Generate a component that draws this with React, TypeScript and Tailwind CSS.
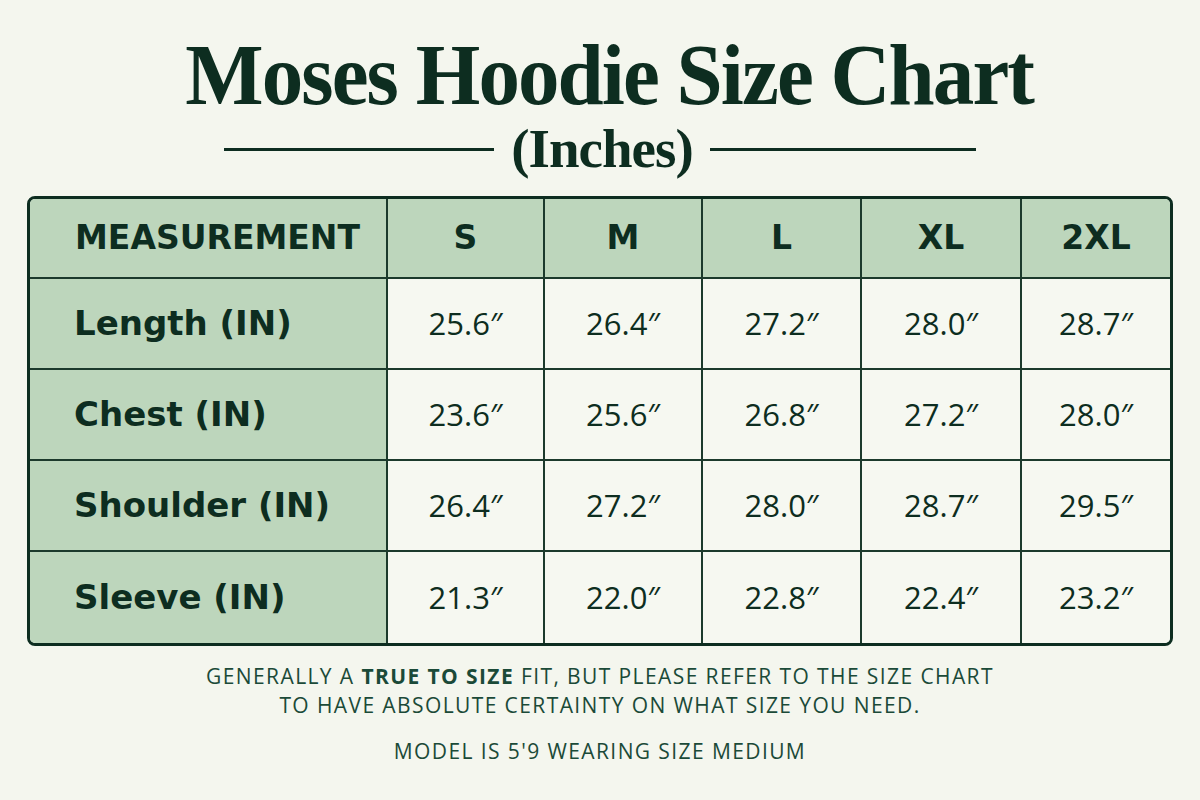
import React from "react";

const sizes = ["S", "M", "L", "XL", "2XL"];

const rows = [
  { label: "Length (IN)", values: ["25.6″", "26.4″", "27.2″", "28.0″", "28.7″"] },
  { label: "Chest (IN)", values: ["23.6″", "25.6″", "26.8″", "27.2″", "28.0″"] },
  { label: "Shoulder (IN)", values: ["26.4″", "27.2″", "28.0″", "28.7″", "29.5″"] },
  { label: "Sleeve (IN)", values: ["21.3″", "22.0″", "22.8″", "22.4″", "23.2″"] },
];

const colW = ["w-[358px]", "w-[157px]", "w-[158px]", "w-[159px]", "w-[160px]", "flex-1"];

const serif = { fontFamily: '"Liberation Serif", "DejaVu Serif", serif' };
const heavy = { fontFamily: '"DejaVu Sans", "Open Sans", sans-serif' };

export default function App() {
  return (
    <div className="w-[1200px] h-[800px] bg-[#f4f6ee] text-[#0d2d20] flex flex-col items-center overflow-hidden">
      <h1
        className="mt-[33px] ml-[18px] h-[85px] text-[86px] leading-[85px] font-bold tracking-[-2px] scale-x-[0.965] whitespace-nowrap"
        style={serif}
      >
        Moses Hoodie Size Chart
      </h1>

      <div className="flex items-center gap-[12px] h-[62px]">
        <div className="w-[270px] h-[3px] bg-[#0d2d20]" />
        <div className="text-[55px] leading-[60px] font-bold tracking-[-1px] w-[192px] text-center whitespace-nowrap" style={serif}>
          (Inches)
        </div>
        <div className="w-[266px] h-[3px] bg-[#0d2d20]" />
      </div>

      <div className="mt-[16px] w-[1146px] border-[3px] border-[#0d2d20] rounded-[8px] overflow-hidden flex flex-col">
        <div className="flex h-[80px] bg-[#bdd6bc] border-b-2 border-[#1c3a2c]">
          <div className={`${colW[0]} flex items-center pl-[45px] text-[33px] font-bold border-r-2 border-[#1c3a2c]`} style={heavy}>
            MEASUREMENT
          </div>
          {sizes.map((s, i) => (
            <div
              key={s}
              className={`${colW[i + 1]} flex items-center justify-center text-[33px] font-bold ${i < 4 ? "border-r-2 border-[#1c3a2c]" : ""}`}
              style={heavy}
            >
              {s}
            </div>
          ))}
        </div>
        {rows.map((r, ri) => (
          <div key={r.label} className={`flex h-[91px] ${ri < 3 ? "border-b-2 border-[#1c3a2c]" : ""}`}>
            <div className={`${colW[0]} bg-[#bdd6bc] flex items-center pl-[44px] text-[34px] font-bold border-r-2 border-[#1c3a2c]`} style={heavy}>
              {r.label}
            </div>
            {r.values.map((v, i) => (
              <div
                key={i}
                className={`${colW[i + 1]} bg-[#f6f8f1] flex items-center justify-center text-[31px] ${i < 4 ? "border-r-2 border-[#1c3a2c]" : ""}`}
                style={{ fontFamily: '"Open Sans", "Liberation Sans", sans-serif' }}
              >
                {v}
              </div>
            ))}
          </div>
        ))}
      </div>

      <div
        className="mt-[16px] text-center text-[21px] leading-[29px] tracking-[1.4px] text-[#1b4a38]"
        style={{ fontFamily: '"Open Sans", "Liberation Sans", sans-serif' }}
      >
        <p>
          GENERALLY A <span className="font-bold">TRUE TO SIZE</span> FIT, BUT PLEASE REFER TO THE SIZE CHART
        </p>
        <p>TO HAVE ABSOLUTE CERTAINTY ON WHAT SIZE YOU NEED.</p>
        <p className="mt-[17px]">MODEL IS 5&apos;9 WEARING SIZE MEDIUM</p>
      </div>
    </div>
  );
}
